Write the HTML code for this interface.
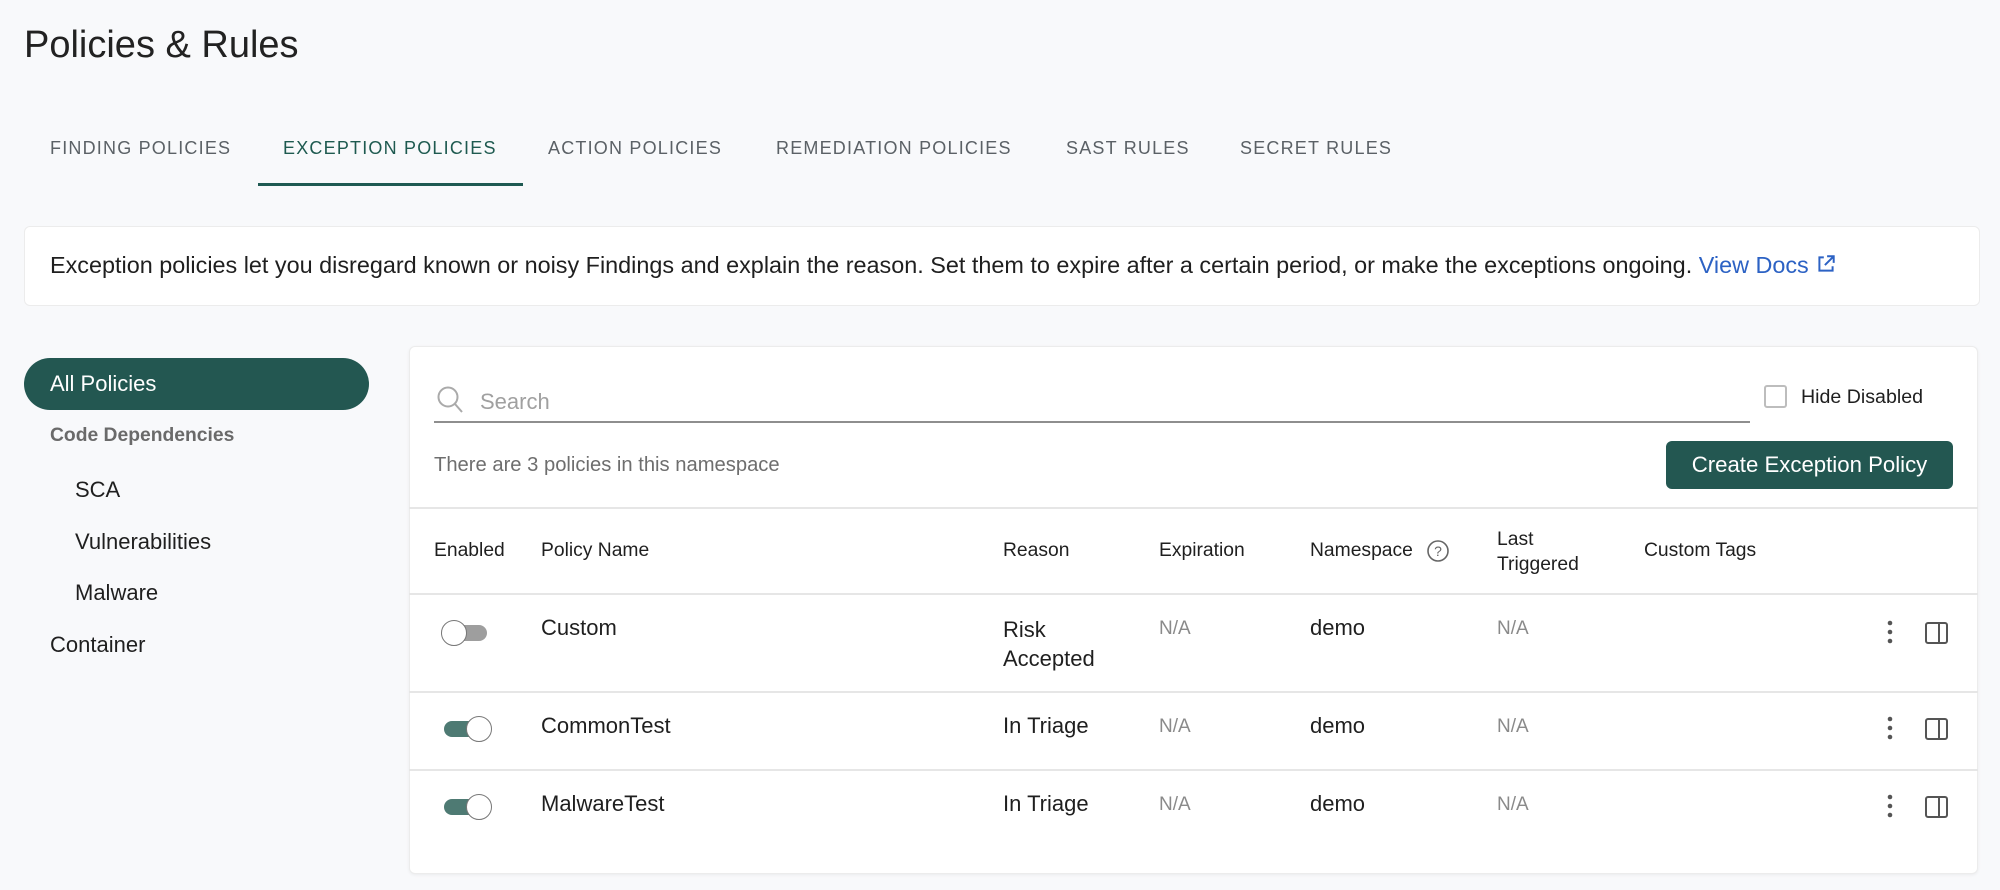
<!DOCTYPE html>
<html><head><meta charset="utf-8"><style>
*{box-sizing:border-box;margin:0;padding:0}
body{width:2000px;height:890px;background:#f8f9fb;font-family:"Liberation Sans",sans-serif;color:#1f1f1f;position:relative;overflow:hidden}
.a{position:absolute;white-space:nowrap}
.tab{position:absolute;top:138px;font-size:18px;letter-spacing:1.2px;color:#5b6166}
.h{font-size:19.3px;color:#1f1f1f}
.t{font-size:22px;color:#1f1f1f}
.na{font-size:19px;color:#8a8a8a}
.line{position:absolute;left:409px;width:1569px;height:2px;background:#e6e6e6}
.tog{position:absolute;width:48px;height:26px}
.tr{position:absolute;top:5px;height:16px;width:44px;border-radius:8px}
.th{position:absolute;top:0;width:26px;height:26px;border-radius:50%;background:#fff;border:1.5px solid #777}
</style></head><body>
<div class="a" style="left:24px;top:24px;font-size:38px;color:#222">Policies &amp; Rules</div>

<div class="tab" style="left:50px">FINDING POLICIES</div>
<div class="tab" style="left:283px;color:#1e5a50">EXCEPTION POLICIES</div>
<div class="tab" style="left:548px">ACTION POLICIES</div>
<div class="tab" style="left:776px">REMEDIATION POLICIES</div>
<div class="tab" style="left:1066px">SAST RULES</div>
<div class="tab" style="left:1240px">SECRET RULES</div>
<div class="a" style="left:258px;top:183px;width:265px;height:3px;background:#1f5a52"></div>

<div class="a" style="left:24px;top:226px;width:1956px;height:80px;background:#fff;border:1px solid #ececec;border-radius:6px"></div>
<div class="a" style="left:50px;top:252px;font-size:23.4px;color:#1f1f1f">Exception policies let you disregard known or noisy Findings and explain the reason. Set them to expire after a certain period, or make the exceptions ongoing. <span style="color:#2c62c4">View Docs</span> <svg width="22" height="22" viewBox="0 0 20 20" style="vertical-align:-2px"><path d="M8 4H4v12h12v-4M11 3h6v6M17 3l-8 8" fill="none" stroke="#2c62c4" stroke-width="1.8"/></svg></div>

<div class="a" style="left:24px;top:358px;width:345px;height:52px;background:#235751;border-radius:26px"></div>
<div class="a" style="left:50px;top:371px;font-size:22px;color:#fff">All Policies</div>
<div class="a" style="left:50px;top:425px;font-size:19.3px;color:#6a6a6a;font-weight:bold">Code Dependencies</div>
<div class="a" style="left:75px;top:477px;font-size:22px">SCA</div>
<div class="a" style="left:75px;top:529px;font-size:22px">Vulnerabilities</div>
<div class="a" style="left:75px;top:580px;font-size:22px">Malware</div>
<div class="a" style="left:50px;top:632px;font-size:22px">Container</div>

<div class="a" style="left:409px;top:346px;width:1569px;height:528px;background:#fff;border:1px solid #ececec;border-radius:6px;box-shadow:0 1px 3px rgba(0,0,0,.06)"></div>
<svg class="a" style="left:436px;top:385px" width="28" height="30" viewBox="0 0 28 30"><circle cx="12" cy="12" r="9.5" fill="none" stroke="#aaa" stroke-width="2"/><path d="M19 19l7 8" stroke="#aaa" stroke-width="2"/></svg>
<div class="a" style="left:480px;top:389px;font-size:22px;color:#a0a0a0">Search</div>
<div class="a" style="left:434px;top:421px;width:1316px;height:2px;background:#8e8e8e"></div>
<div class="a" style="left:1764px;top:385px;width:23px;height:23px;border:2px solid #bdbdbd;border-radius:3px"></div>
<div class="a" style="left:1801px;top:386px;font-size:19.6px">Hide Disabled</div>
<div class="a" style="left:434px;top:454px;font-size:20.2px;color:#6e6e6e">There are 3 policies in this namespace</div>
<div class="a" style="left:1666px;top:441px;width:287px;height:48px;background:#235751;border-radius:6px;color:#fff;font-size:22.2px;text-align:center;line-height:48px">Create Exception Policy</div>
<div class="line" style="top:507px"></div>

<div class="a h" style="left:434px;top:540px">Enabled</div>
<div class="a h" style="left:541px;top:540px">Policy Name</div>
<div class="a h" style="left:1003px;top:540px">Reason</div>
<div class="a h" style="left:1159px;top:540px">Expiration</div>
<div class="a h" style="left:1310px;top:540px">Namespace</div>
<svg class="a" style="left:1426px;top:539px" width="24" height="24"><circle cx="12" cy="12" r="10" fill="none" stroke="#666" stroke-width="1.6"/><text x="12" y="17" font-size="14" text-anchor="middle" fill="#666" font-family="Liberation Sans">?</text></svg>
<div class="a h" style="left:1497px;top:527px;line-height:25px">Last<br>Triggered</div>
<div class="a h" style="left:1644px;top:540px">Custom Tags</div>
<div class="line" style="top:593px"></div>

<div class="tog" style="left:441px;top:620px"><div class="tr" style="left:2px;background:#9e9e9e"></div><div class="th" style="left:0"></div></div>
<div class="a t" style="left:541px;top:615px">Custom</div>
<div class="a t" style="left:1003px;top:615px;line-height:29px">Risk<br>Accepted</div>
<div class="a na" style="left:1159px;top:618px">N/A</div>
<div class="a t" style="left:1310px;top:615px">demo</div>
<div class="a na" style="left:1497px;top:618px">N/A</div>
<div class="line" style="top:691px"></div>

<div class="tog" style="left:444px;top:716px"><div class="tr" style="left:0;background:#4e7a73"></div><div class="th" style="left:22px"></div></div>
<div class="a t" style="left:541px;top:713px">CommonTest</div>
<div class="a t" style="left:1003px;top:713px">In Triage</div>
<div class="a na" style="left:1159px;top:716px">N/A</div>
<div class="a t" style="left:1310px;top:713px">demo</div>
<div class="a na" style="left:1497px;top:716px">N/A</div>
<div class="line" style="top:769px"></div>

<div class="tog" style="left:444px;top:794px"><div class="tr" style="left:0;background:#4e7a73"></div><div class="th" style="left:22px"></div></div>
<div class="a t" style="left:541px;top:791px">MalwareTest</div>
<div class="a t" style="left:1003px;top:791px">In Triage</div>
<div class="a na" style="left:1159px;top:794px">N/A</div>
<div class="a t" style="left:1310px;top:791px">demo</div>
<div class="a na" style="left:1497px;top:794px">N/A</div>

<svg class="a" style="left:1880px;top:618px" width="20" height="30"><circle cx="10" cy="5" r="2.3" fill="#555"/><circle cx="10" cy="14" r="2.3" fill="#555"/><circle cx="10" cy="23" r="2.3" fill="#555"/></svg>
<svg class="a" style="left:1924px;top:620px" width="26" height="26"><rect x="2" y="3" width="21" height="20" rx="2" fill="none" stroke="#555" stroke-width="2"/><path d="M15 3v20" stroke="#555" stroke-width="2"/></svg>
<svg class="a" style="left:1880px;top:714px" width="20" height="30"><circle cx="10" cy="5" r="2.3" fill="#555"/><circle cx="10" cy="14" r="2.3" fill="#555"/><circle cx="10" cy="23" r="2.3" fill="#555"/></svg>
<svg class="a" style="left:1924px;top:716px" width="26" height="26"><rect x="2" y="3" width="21" height="20" rx="2" fill="none" stroke="#555" stroke-width="2"/><path d="M15 3v20" stroke="#555" stroke-width="2"/></svg>
<svg class="a" style="left:1880px;top:792px" width="20" height="30"><circle cx="10" cy="5" r="2.3" fill="#555"/><circle cx="10" cy="14" r="2.3" fill="#555"/><circle cx="10" cy="23" r="2.3" fill="#555"/></svg>
<svg class="a" style="left:1924px;top:794px" width="26" height="26"><rect x="2" y="3" width="21" height="20" rx="2" fill="none" stroke="#555" stroke-width="2"/><path d="M15 3v20" stroke="#555" stroke-width="2"/></svg>
</body></html>
